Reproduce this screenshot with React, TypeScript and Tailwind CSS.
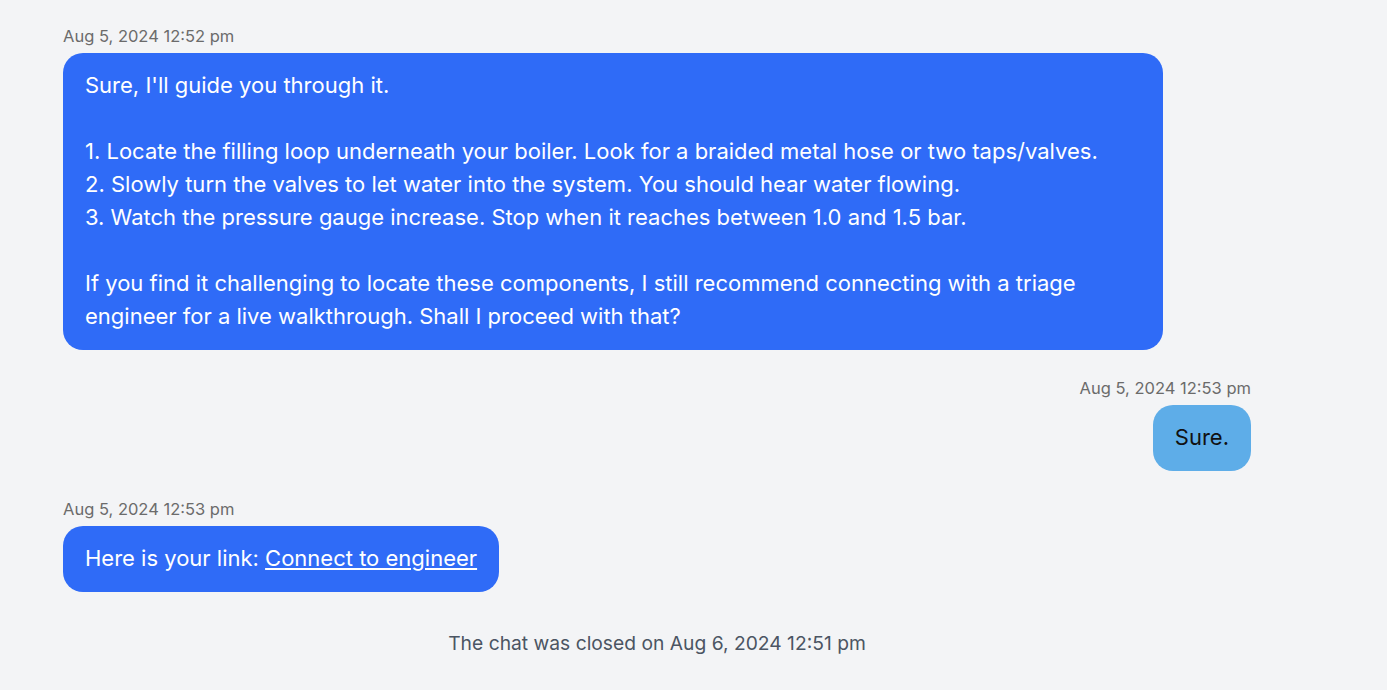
import React from "react";

type Msg = {
  time: string;
  from: "agent" | "user";
  body: React.ReactNode;
};

const messages: Msg[] = [
  {
    time: "Aug 5, 2024 12:52 pm",
    from: "agent",
    body: (
      <>
        Sure, I'll guide you through it.
        <br />
        <br />
        1. Locate the filling loop underneath your boiler. Look for a braided metal hose or two taps/valves.
        <br />
        2. Slowly turn the valves to let water into the system. You should hear water flowing.
        <br />
        3. Watch the pressure gauge increase. Stop when it reaches between 1.0 and 1.5 bar.
        <br />
        <br />
        If you find it challenging to locate these components, I still recommend connecting with a triage engineer
        for a live walkthrough. Shall I proceed with that?
      </>
    ),
  },
  { time: "Aug 5, 2024 12:53 pm", from: "user", body: "Sure." },
  {
    time: "Aug 5, 2024 12:53 pm",
    from: "agent",
    body: (
      <>
        Here is your link:{" "}
        <a href="#" className="underline">
          Connect to engineer
        </a>
      </>
    ),
  },
];

function Message({ msg }: { msg: Msg }) {
  const mine = msg.from === "user";
  return (
    <div className={`flex flex-col ${mine ? "items-end" : "items-start"}`}>
      <div className="mb-[6px] text-[16.5px] leading-[22px] text-[#6b6b6b]">{msg.time}</div>
      <div
        className={`max-w-[1100px] rounded-[20px] px-[22px] pt-[15.5px] pb-[17.5px] text-[22px] leading-[33px] ${
          mine ? "bg-[#5eade8] text-[#111]" : "bg-[#2f6bf7] text-white"
        }`}
      >
        {msg.body}
      </div>
    </div>
  );
}

export default function App() {
  return (
    <div className="min-h-[690px] bg-[#f3f4f6] font-['Inter','Noto_Sans',sans-serif]">
      <div className="w-[1188px] ml-[63px] pt-[25px] flex flex-col gap-[27px]">
        {messages.map((m, i) => (
          <Message key={i} msg={m} />
        ))}
        <div className="text-center text-[19.25px] leading-6 text-[#4b5563] mt-[12px]">
          The chat was closed on Aug 6, 2024 12:51 pm
        </div>
      </div>
    </div>
  );
}
